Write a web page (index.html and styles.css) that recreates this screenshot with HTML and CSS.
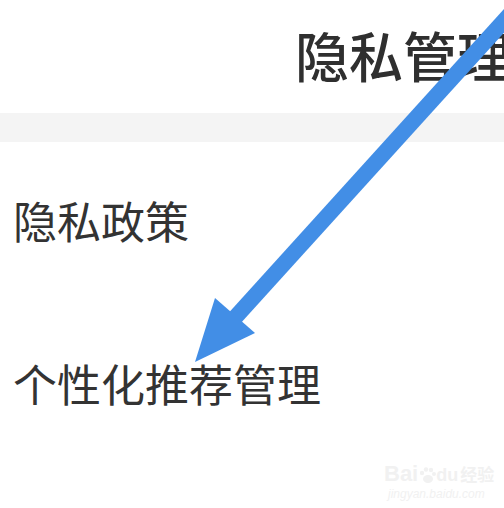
FILE: index.html
```html
<!DOCTYPE html>
<html lang="zh">
<head>
<meta charset="utf-8">
<title>隐私管理</title>
<link rel="stylesheet" href="styles.css">
</head>
<body>
<div class="page">
  <header class="header">
    <h1 class="title">隐私管理</h1>
  </header>
  <div class="band"></div>
  <ul class="list">
    <li class="item item-first">隐私政策</li>
    <li class="item item-second">个性化推荐管理</li>
  </ul>
  <svg class="arrow" width="504" height="508" viewBox="0 0 504 508">
    <line x1="532" y1="-10" x2="222" y2="332" stroke="#428ee6" stroke-width="16"/>
    <polygon points="195,362 215,298 255,333" fill="#428ee6"/>
  </svg>
  <div class="watermark">
    <div class="wm-logo"><span class="wm-bai">Bai</span><svg class="wm-paw" width="18" height="18" viewBox="0 0 18 18"><circle cx="4" cy="7" r="2.2"/><circle cx="8" cy="3.5" r="2.2"/><circle cx="13" cy="4" r="2.2"/><circle cx="16" cy="8" r="2"/><ellipse cx="10" cy="13" rx="5" ry="4"/></svg><span class="wm-du">du</span><span class="wm-jy">经验</span></div>
    <div class="wm-url">jingyan.baidu.com</div>
  </div>
</div>
</body>
</html>
```
FILE: styles.css
```css
html, body {
  margin: 0;
  padding: 0;
  background: #ffffff;
  overflow: hidden;
}
.page {
  position: relative;
  width: 504px;
  height: 508px;
  overflow: hidden;
  font-family: "Noto Sans CJK SC", "Noto Sans", sans-serif;
  color: #333333;
}
.header {
  height: 113px;
  display: flex;
  box-sizing: border-box;
  padding-top: 28px;
  padding-left: 295px;
}
.title {
  margin: 0;
  font-size: 54px;
  line-height: 54px;
  font-weight: 500;
  white-space: nowrap;
  color: #2f2f2f;
}
.band {
  height: 29px;
  background: #f4f4f4;
}
.list {
  list-style: none;
  margin: 0;
  padding: 0 0 0 13px;
  display: flex;
  flex-direction: column;
}
.item {
  font-size: 44px;
  line-height: 44px;
  white-space: nowrap;
  color: #333333;
}
.item-first {
  margin-top: 56px;
}
.item-second {
  margin-top: 119px;
}
.arrow {
  position: absolute;
  left: 0;
  top: 0;
}
.watermark {
  position: absolute;
  left: 384px;
  top: 462px;
  color: #f1f1f1;
  font-family: "Liberation Sans", sans-serif;
}
.wm-logo {
  display: flex;
  align-items: baseline;
  font-size: 22px;
  font-weight: 700;
  line-height: 24px;
}
.wm-paw {
  fill: #f1f1f1;
  align-self: center;
}
.wm-du {
  font-size: 18px;
}
.wm-jy {
  font-family: "Noto Sans CJK SC", sans-serif;
  font-size: 17px;
  margin-left: 2px;
}
.wm-url {
  font-size: 12px;
  font-style: italic;
  line-height: 14px;
  margin-left: 4px;
}
```
